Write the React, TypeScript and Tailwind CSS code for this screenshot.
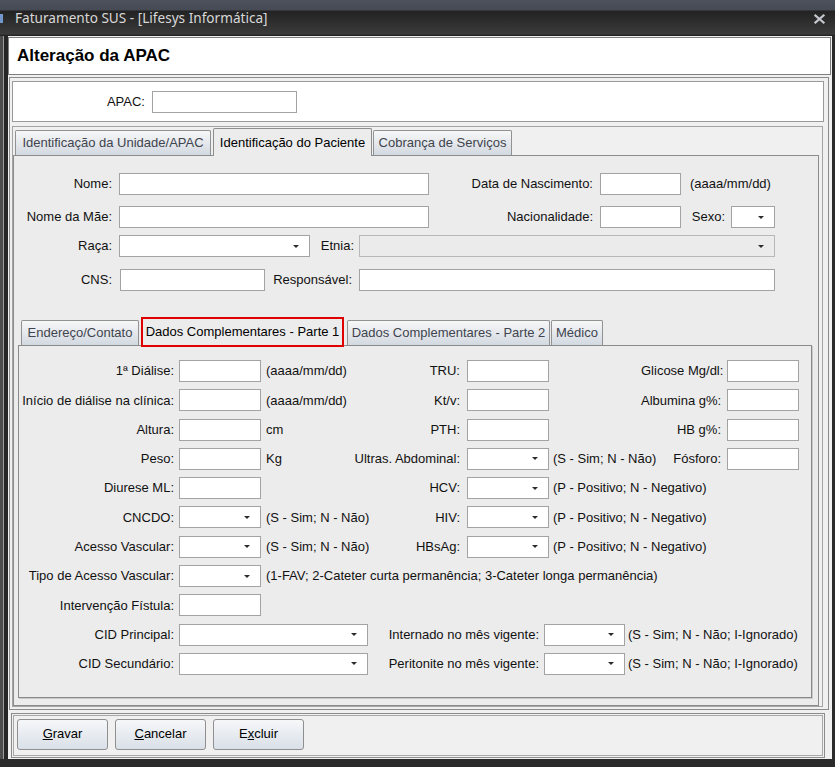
import type { ReactNode } from 'react'

function cx(...c: (string | false | undefined)[]) {
  return c.filter(Boolean).join(' ')
}

function TextField({ className = '' }: { className?: string }) {
  return (
    <input
      type="text"
      readOnly
      className={cx('h-[22px] shrink-0 bg-white border border-[#a3a3a3] outline-none px-1', className)}
    />
  )
}

function Combo({ className = '', disabled = false }: { className?: string; disabled?: boolean }) {
  return (
    <div
      className={cx(
        'h-[22px] shrink-0 border flex items-center justify-end pr-[10px]',
        disabled ? 'bg-[#ebebeb] border-[#b8b8b8]' : 'bg-white border-[#a3a3a3]',
        className
      )}
    >
      <svg width="6" height="3" viewBox="0 0 6 3">
        <path d="M0 0H6L3 3Z" fill="#2b2b2b" />
      </svg>
    </div>
  )
}

function Tab({ label, active = false, className = '' }: { label: string; active?: boolean; className?: string }) {
  return (
    <div
      className={cx(
        'shrink-0 flex items-center justify-center whitespace-nowrap border border-b-0 rounded-t-[2px]',
        active
          ? 'h-[28px] -mb-px relative z-10 bg-[#ececec] border-[#8c8c8c] text-black'
          : 'h-[25px] bg-linear-to-b from-[#f7f7f7] to-[#d3d9e1] border-[#919191] text-[#40444e]',
        className
      )}
    >
      {label}
    </div>
  )
}

interface RowProps {
  label: string
  field?: ReactNode
  hint?: string
  label2?: string
  field2?: ReactNode
  hint2?: string
  label3?: string
  field3?: ReactNode
}

// one line of the "Dados Complementares" grid
function DataRow({ label, field, hint, label2, field2, hint2, label3, field3 }: RowProps) {
  return (
    <div className="flex items-center h-[22px] whitespace-nowrap">
      <span className="w-[155px] shrink-0 text-right">{label}</span>
      <div className="ml-[5px] w-[170px] shrink-0 flex items-center">
        {field}
        {hint && <span className="ml-[5px]">{hint}</span>}
      </div>
      {label2 && (
        <>
          <span className="w-[111px] shrink-0 text-right">{label2}</span>
          <div className="ml-[7px] w-[174px] shrink-0 flex items-center">
            {field2}
            {hint2 && <span className="ml-[4px]">{hint2}</span>}
          </div>
        </>
      )}
      {label3 && (
        <>
          <span className="w-[80px] shrink-0 text-right">{label3}</span>
          <div className="ml-[6px] shrink-0">{field3}</div>
        </>
      )}
    </div>
  )
}

function CidRow({ label, label2 }: { label: string; label2: string }) {
  return (
    <div className="flex items-center h-[22px] whitespace-nowrap">
      <span className="w-[155px] shrink-0 text-right">{label}</span>
      <Combo className="ml-[5px] w-[189px]" />
      <span className="w-[171px] shrink-0 text-right">{label2}</span>
      <Combo className="ml-[5px] w-[81px]" />
      <span className="ml-[3px]">(S - Sim; N - Não; I-Ignorado)</span>
    </div>
  )
}

function Btn({ children }: { children: ReactNode }) {
  return (
    <button className="w-[91px] h-[31px] shrink-0 rounded-[3px] border border-[#8f8f8f] bg-linear-to-b from-[#f6f7f9] to-[#d9e0e8] text-black pb-[2px]">
      {children}
    </button>
  )
}

export default function App() {
  return (
    <div className="w-[835px] h-[767px] bg-[#2a2a2a] flex flex-col overflow-hidden font-['Liberation_Sans',Arial,sans-serif] text-[13px] text-[#111]">
      {/* Title bar */}
      <div className="h-[36px] shrink-0 flex items-center bg-[linear-gradient(to_bottom,#4d525c_0px,#464a54_10px,#222222_11px,#3b3b3b_34px,#1c1c1c_36px)]">
        <span className="w-[3px] h-[9px] bg-[#7396cc]" />
        <span className="ml-[12px] pt-px font-['Noto_Sans',sans-serif] text-[13.6px] text-[#d8d8d8]">
          Faturamento SUS - [Lifesys Informática]
        </span>
        <svg className="ml-auto mr-[10px] mt-[1px]" width="11" height="10" viewBox="0 0 11 10">
          <path d="M1.5 1.5L9.5 8.5M9.5 1.5L1.5 8.5" stroke="#c4c8ce" strokeWidth="2.2" strokeLinecap="square" />
        </svg>
      </div>

      <div className="flex h-[723px] shrink-0">
        {/* left frame */}
        <div className="w-[8px] shrink-0 flex">
          <div className="w-[3px] bg-[#4c4c4c]" />
          <div className="w-px bg-[#9c9c9c]" />
          <div className="w-[4px] bg-[#262626]" />
        </div>

        <div className="w-[824px] shrink-0 bg-[#f0f0f0] flex flex-col pt-px">
          {/* Header */}
          <div className="h-[38px] shrink-0 mr-px bg-white border border-[#7f7f7f] flex items-center pl-[8px]">
            <h1 className="font-bold text-[17px] text-black">Alteração da APAC</h1>
          </div>

          {/* Main box */}
          <div className="mt-[2px] ml-px mr-[3px] h-[633px] shrink-0 border border-[#8c8c8c] flex flex-col pl-[2px] pr-[4px] pt-[3px] pb-[2px]">
            <div className="h-[41px] shrink-0 bg-white border border-[#9a9a9a] flex items-center">
              <span className="w-[132px] text-right">APAC:</span>
              <TextField className="ml-[7px] w-[145px] h-[21px]" />
            </div>

            <div className="mt-[4px] flex-1 mr-px border border-[#a4a4a4] flex flex-col pt-px pr-[3px]">
              {/* Outer tabs */}
              <div className="flex items-end ml-[2px] h-[27px] shrink-0">
                <Tab label="Identificação da Unidade/APAC" className="w-[196px]" />
                <Tab label="Identificação do Paciente" active className="ml-[2px] w-[159px]" />
                <Tab label="Cobrança de Serviços" className="ml-px w-[139px]" />
              </div>

              <div className="flex-1 border border-[#8c8c8c] bg-[#ececec] flex flex-col pt-[17px]">
                <div className="flex items-center h-[22px] whitespace-nowrap">
                  <span className="w-[98px] shrink-0 text-right">Nome:</span>
                  <TextField className="ml-[7px] w-[310px]" />
                  <span className="w-[164px] shrink-0 text-right">Data de Nascimento:</span>
                  <TextField className="ml-[7px] w-[81px]" />
                  <span className="ml-[9px]">(aaaa/mm/dd)</span>
                </div>
                <div className="mt-[11px] flex items-center h-[22px] whitespace-nowrap">
                  <span className="w-[98px] shrink-0 text-right">Nome da Mãe:</span>
                  <TextField className="ml-[7px] w-[310px]" />
                  <span className="w-[164px] shrink-0 text-right">Nacionalidade:</span>
                  <TextField className="ml-[7px] w-[81px]" />
                  <span className="w-[44px] shrink-0 text-right">Sexo:</span>
                  <Combo className="ml-[6px] w-[44px]" />
                </div>
                <div className="mt-[7px] flex items-center h-[22px] whitespace-nowrap">
                  <span className="w-[98px] shrink-0 text-right">Raça:</span>
                  <Combo className="ml-[7px] w-[191px]" />
                  <span className="w-[44px] shrink-0 text-right">Etnia:</span>
                  <Combo disabled className="ml-[5px] w-[416px]" />
                </div>
                <div className="mt-[12px] flex items-center h-[22px] whitespace-nowrap">
                  <span className="w-[98px] shrink-0 text-right">CNS:</span>
                  <TextField className="ml-[8px] w-[145px]" />
                  <span className="w-[87px] shrink-0 text-right">Responsável:</span>
                  <TextField className="ml-[7px] w-[416px]" />
                </div>

                {/* Inner tabs */}
                <div className="mt-[26px] ml-[7px] h-[28px] shrink-0 flex items-end">
                  <Tab label="Endereço/Contato" className="w-[118px]" />
                  <div className="ml-[2px] w-[203px] h-[30px] -mb-[2px] relative z-10 shrink-0 flex items-center justify-center whitespace-nowrap border-2 border-[#e00000] bg-[#ececec] text-black">
                    Dados Complementares - Parte 1
                  </div>
                  <Tab label="Dados Complementares - Parte 2" className="ml-[3px] w-[203px]" />
                  <Tab label="Médico" className="ml-px w-[52px]" />
                </div>

                <div className="ml-[4px] w-[794px] h-[353px] shrink-0 border border-[#8a8a8a] shadow-[1px_1px_0_#c9c9c9] bg-[#ececec] flex flex-col pt-[14px] gap-[7.3px]">
                  <DataRow
                    label="1ª Diálise:"
                    field={<TextField className="w-[82px]" />}
                    hint="(aaaa/mm/dd)"
                    label2="TRU:"
                    field2={<TextField className="w-[82px]" />}
                    label3="Glicose Mg/dl:"
                    field3={<TextField className="w-[72px]" />}
                  />
                  <DataRow
                    label="Início de diálise na clínica:"
                    field={<TextField className="w-[82px]" />}
                    hint="(aaaa/mm/dd)"
                    label2="Kt/v:"
                    field2={<TextField className="w-[82px]" />}
                    label3="Albumina g%:"
                    field3={<TextField className="w-[72px]" />}
                  />
                  <DataRow
                    label="Altura:"
                    field={<TextField className="w-[82px]" />}
                    hint="cm"
                    label2="PTH:"
                    field2={<TextField className="w-[82px]" />}
                    label3="HB g%:"
                    field3={<TextField className="w-[72px]" />}
                  />
                  <DataRow
                    label="Peso:"
                    field={<TextField className="w-[82px]" />}
                    hint="Kg"
                    label2="Ultras. Abdominal:"
                    field2={<Combo className="w-[82px]" />}
                    hint2="(S - Sim; N - Não)"
                    label3="Fósforo:"
                    field3={<TextField className="w-[72px]" />}
                  />
                  <DataRow
                    label="Diurese ML:"
                    field={<TextField className="w-[82px]" />}
                    label2="HCV:"
                    field2={<Combo className="w-[82px]" />}
                    hint2="(P - Positivo; N - Negativo)"
                  />
                  <DataRow
                    label="CNCDO:"
                    field={<Combo className="w-[82px]" />}
                    hint="(S - Sim; N - Não)"
                    label2="HIV:"
                    field2={<Combo className="w-[82px]" />}
                    hint2="(P - Positivo; N - Negativo)"
                  />
                  <DataRow
                    label="Acesso Vascular:"
                    field={<Combo className="w-[82px]" />}
                    hint="(S - Sim; N - Não)"
                    label2="HBsAg:"
                    field2={<Combo className="w-[82px]" />}
                    hint2="(P - Positivo; N - Negativo)"
                  />
                  <DataRow
                    label="Tipo de Acesso Vascular:"
                    field={<Combo className="w-[82px]" />}
                    hint="(1-FAV; 2-Cateter curta permanência; 3-Cateter longa permanência)"
                  />
                  <DataRow label="Intervenção Fístula:" field={<TextField className="w-[82px]" />} />
                  <CidRow label="CID Principal:" label2="Internado no mês vigente:" />
                  <CidRow label="CID Secundário:" label2="Peritonite no mês vigente:" />
                </div>
              </div>
            </div>
          </div>

          {/* Button bar */}
          <div className="mt-[3px] ml-[3px] mr-[7px] h-[45px] shrink-0 border border-[#8c8c8c] p-px flex">
            <div className="flex-1 border border-[#a8a8a8] flex items-start gap-[7px] pl-[3px] pt-[3px]">
              <Btn>
                <span className="underline">G</span>ravar
              </Btn>
              <Btn>
                <span className="underline">C</span>ancelar
              </Btn>
              <Btn>
                E<span className="underline">x</span>cluir
              </Btn>
            </div>
          </div>
        </div>

        {/* right frame */}
        <div className="w-[3px] shrink-0 bg-[#2a2a2a]" />
      </div>

      {/* bottom frame */}
      <div className="h-[8px] shrink-0 bg-[#2a2a2a]" />
    </div>
  )
}
